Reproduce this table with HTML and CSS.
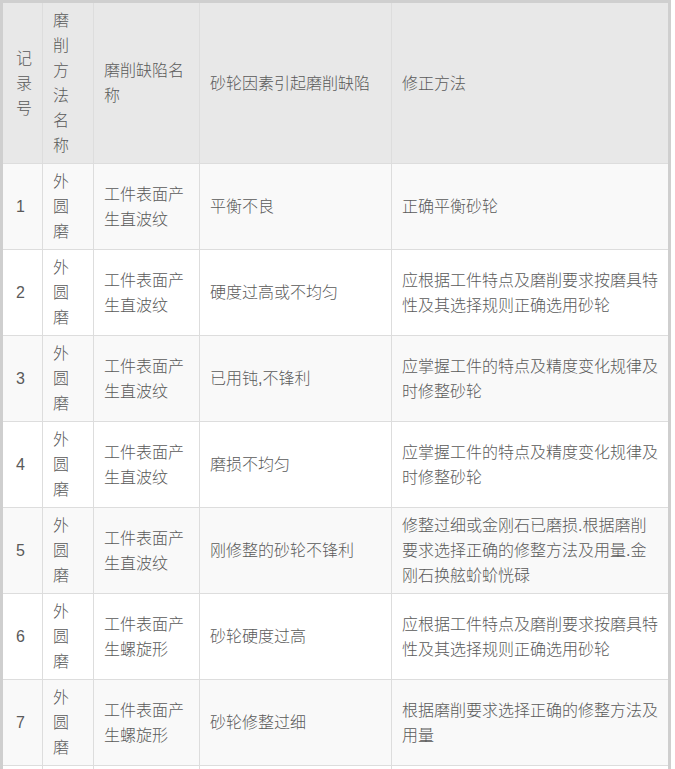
FILE: index.html
```html
<!DOCTYPE html>
<html lang="zh-CN">
<head>
<meta charset="utf-8">
<title>磨削缺陷</title>
<link rel="stylesheet" href="styles.css">
</head>
<body>
<table class="grid">
  <colgroup>
    <col class="c1"><col class="c2"><col class="c3"><col class="c4"><col class="c5">
  </colgroup>
  <thead>
    <tr>
      <th>记录号</th>
      <th>磨削方法名称</th>
      <th>磨削缺陷名称</th>
      <th>砂轮因素引起磨削缺陷</th>
      <th>修正方法</th>
    </tr>
  </thead>
  <tbody>
    <tr><td>1</td><td>外圆磨</td><td>工件表面产生直波纹</td><td>平衡不良</td><td>正确平衡砂轮</td></tr>
    <tr><td>2</td><td>外圆磨</td><td>工件表面产生直波纹</td><td>硬度过高或不均匀</td><td>应根据工件特点及磨削要求按磨具特性及其选择规则正确选用砂轮</td></tr>
    <tr><td>3</td><td>外圆磨</td><td>工件表面产生直波纹</td><td>已用钝,不锋利</td><td>应掌握工件的特点及精度变化规律及时修整砂轮</td></tr>
    <tr><td>4</td><td>外圆磨</td><td>工件表面产生直波纹</td><td>磨损不均匀</td><td>应掌握工件的特点及精度变化规律及时修整砂轮</td></tr>
    <tr><td>5</td><td>外圆磨</td><td>工件表面产生直波纹</td><td>刚修整的砂轮不锋利</td><td>修整过细或金刚石已磨损.根据磨削要求选择正确的修整方法及用量.金刚石换舷蚧蚧恍碌</td></tr>
    <tr><td>6</td><td>外圆磨</td><td>工件表面产生螺旋形</td><td>砂轮硬度过高</td><td>应根据工件特点及磨削要求按磨具特性及其选择规则正确选用砂轮</td></tr>
    <tr><td>7</td><td>外圆磨</td><td>工件表面产生螺旋形</td><td>砂轮修整过细</td><td>根据磨削要求选择正确的修整方法及用量</td></tr>
    <tr class="next"><td></td><td></td><td></td><td></td><td></td></tr>
  </tbody>
</table>
</body>
</html>
```

FILE: styles.css
```css
html, body {
  margin: 0;
  padding: 0;
  background: #ffffff;
}

.grid {
  table-layout: fixed;
  border-collapse: separate;
  border-spacing: 0;
  width: 671px;
  border-top: 3px solid #cfcfcf;
  border-left: 3px solid #cfcfcf;
  border-right: 3px solid #cfcfcf;
  font-family: "Liberation Sans", "Noto Sans CJK SC", sans-serif;
  font-size: 16px;
  font-weight: 300;
  line-height: 25px;
  color: #5a5a5a;
}

.c1 { width: 40px; }
.c2 { width: 51px; }
.c3 { width: 106px; }
.c4 { width: 192px; }
.c5 { width: 276px; }

.grid th,
.grid td {
  padding: 5px 10px;
  text-align: left;
  vertical-align: middle;
  font-weight: 300;
  border-right: 1px solid #dddddd;
  border-bottom: 1px solid #dddddd;
  word-break: break-all;
}

.grid th:first-child,
.grid td:first-child {
  padding-left: 13px;
  padding-right: 7px;
}

.grid th:last-child,
.grid td:last-child {
  border-right: none;
}

.grid thead th {
  background: #e8e8e8;
}

.grid tbody tr:nth-child(odd) td {
  background: #f9f9f9;
}

.grid tbody tr:nth-child(even) td {
  background: #ffffff;
}

.grid tr.next td {
  height: 60px;
}
```
